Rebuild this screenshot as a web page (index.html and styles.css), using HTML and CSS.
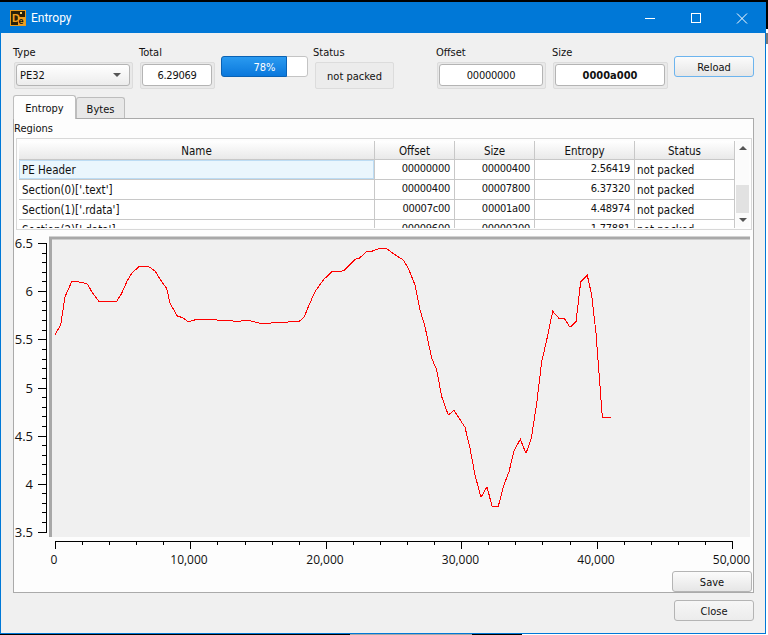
FILE: index.html
```html
<!DOCTYPE html>
<html lang="en">
<head>
    <meta charset="UTF-8">
    <meta name="viewport" content="width=device-width, initial-scale=1.0">
    <title>Entropy</title>
    <link rel="stylesheet" href="styles.css">
</head>
<body>
    <div class="window">
        <div class="titlebar">
            <svg class="app-icon" width="16" height="16" viewBox="0 0 16 16">
                <rect x="0.5" y="0.5" width="15" height="15" fill="#2a2008" stroke="#e89a1c"/>
                <rect x="8" y="7" width="7" height="8" fill="#f0a020"/>
                <text class="icon-d" x="2" y="12">D</text>
                <text class="icon-e" x="8.5" y="14">e</text>
                <rect x="10" y="2" width="2" height="2" fill="#f5d26a"/>
            </svg>
            <span class="title">Entropy</span>
            <div class="controls">
                <svg class="control" width="46" height="31" viewBox="0 0 46 31"><path d="M18 15.500h10" stroke="#fff" fill="none"/></svg>
                <svg class="control" width="46" height="31" viewBox="0 0 46 31"><rect x="18.500" y="10.500" width="9" height="9" stroke="#fff" fill="none"/></svg>
                <svg class="control" width="46" height="31" viewBox="0 0 46 31"><path d="M18 10.500l10 10M28 10.500l-10 10" stroke="#fff" fill="none"/></svg>
            </div>
        </div>

        <div class="toolbar">
            <div class="group group-type">
                <label>Type</label>
                <div class="frame">
                    <div class="combo">PE32<span class="arrow"></span></div>
                </div>
            </div>
            <div class="group group-total">
                <label>Total</label>
                <div class="frame"><div class="edit">6.29069</div></div>
            </div>
            <div class="progress">
                <div class="progress-fill" style="width: 78%"></div>
                <span class="progress-label">78%</span>
            </div>
            <div class="group group-status">
                <label>Status</label>
                <div class="status-box">not packed</div>
            </div>
            <div class="group group-offset">
                <label>Offset</label>
                <div class="frame"><div class="edit">00000000</div></div>
            </div>
            <div class="group group-size">
                <label>Size</label>
                <div class="frame"><div class="edit bold">0000a000</div></div>
            </div>
            <button class="btn btn-focus">Reload</button>
        </div>

        <div class="tabs">
            <div class="tab active">Entropy</div>
            <div class="tab">Bytes</div>
        </div>

        <div class="pane">
            <div class="regions">Regions</div>
            <div class="table-frame">
                <div class="table-clip">
                    <table>
                        <thead>
                            <tr><th class="c-name">Name</th><th class="c-num">Offset</th><th class="c-num">Size</th><th class="c-ent">Entropy</th><th class="c-ent">Status</th></tr>
                        </thead>
                        <tbody>
                            <tr><td class="selected">PE Header</td><td class="num">00000000</td><td class="num">00000400</td><td class="num">2.56419</td><td class="state">not packed</td></tr>
                            <tr><td>Section(0)['.text']</td><td class="num">00000400</td><td class="num">00007800</td><td class="num">6.37320</td><td class="state">not packed</td></tr>
                            <tr><td>Section(1)['.rdata']</td><td class="num">00007c00</td><td class="num">00001a00</td><td class="num">4.48974</td><td class="state">not packed</td></tr>
                            <tr><td>Section(2)['.data']</td><td class="num">00009600</td><td class="num">00000200</td><td class="num">1.77881</td><td class="state">not packed</td></tr>
                        </tbody>
                    </table>
                </div>
                <div class="scrollbar">
                    <span class="sb-up"></span>
                    <div class="sb-thumb"></div>
                    <span class="sb-down"></span>
                </div>
            </div>

            <!-- viewBox uses window coordinates so the numbers read straight off the plot -->
            <svg class="chart" width="739" height="340" viewBox="14 231 739 340">
                <rect x="49" y="237" width="701" height="300" fill="#f0f0f0"/>
                <path d="M50.500 537V238H750" fill="none" stroke="#a8a8a8" stroke-width="3"/>
                <g class="axis">
                    <path d="M46.500 243V533M38 243.500h9M42 253.500h5M42 262.500h5M42 272.500h5M42 281.500h5M38 291.500h9M42 301.500h5M42 310.500h5M42 320.500h5M42 330.500h5M38 339.500h9M42 349.500h5M42 359.500h5M42 368.500h5M42 378.500h5M38 388.500h9M42 397.500h5M42 407.500h5M42 416.500h5M42 426.500h5M38 436.500h9M42 445.500h5M42 455.500h5M42 464.500h5M42 474.500h5M38 484.500h9M42 493.500h5M42 503.500h5M42 512.500h5M42 522.500h5M38 532.500h9"/>
                    <path d="M55 541.500H733M55.500 542v7M82.500 542v3M109.500 542v3M136.500 542v3M163.500 542v3M190.500 542v7M217.500 542v3M245.500 542v3M272.500 542v3M299.500 542v3M326.500 542v7M353.500 542v3M380.500 542v3M407.500 542v3M434.500 542v3M461.500 542v7M488.500 542v3M515.500 542v3M542.500 542v3M570.500 542v3M597.500 542v7M624.500 542v3M651.500 542v3M678.500 542v3M705.500 542v3M732.500 542v7"/>
                </g>
                <g class="ylabels">
                    <text x="33" y="248">6.5</text>
                    <text x="33" y="296">6</text>
                    <text x="33" y="344">5.5</text>
                    <text x="33" y="393">5</text>
                    <text x="33" y="441">4.5</text>
                    <text x="33" y="489">4</text>
                    <text x="33" y="537">3.5</text>
                </g>
                <g class="xlabels">
                    <text x="54" y="564">0</text>
                    <text x="189" y="564">10,000</text>
                    <text x="325" y="564">20,000</text>
                    <text x="460.500" y="564">30,000</text>
                    <text x="596" y="564">40,000</text>
                    <text x="731.500" y="564">50,000</text>
                </g>
                <polyline class="curve" points="55,334.7 60.7,325 65,296.7 71.7,281.7 76.7,281.7 83.3,282.7 87.7,284.3 91.7,291.7 99.3,302 116.7,301.3 121.7,293.3 127.3,280.7 131.7,273.3 139.3,266.3 148.3,266.3 155,271 161.7,281.7 166.7,288.3 170,303.3 177.3,316 182.7,317.7 188.3,322 196.7,319.3 210,319.3 220,320.3 238.3,321.3 248.3,320.3 260,323.3 266,323.3 282.7,322.3 299.3,321.3 304.3,316.7 308.3,306.7 315,291.7 323.3,280 331.7,271.7 340,271.3 344,270.7 355,259.3 359.3,258.3 366.7,251.3 371.7,251.3 380,248.3 386,248.3 395,254.7 403.3,260 408.3,268.3 415,285 420,310 425,326.7 431.7,358.3 436.7,370 441.7,396.7 448.3,415 454,410.3 465,427.3 470,448.3 475,475 481,497.3 487,486.7 492,506.3 498.3,506.3 503.3,486.7 509,471.7 514.3,450 520.3,439.3 526,453.3 531.3,438.3 536.7,403.3 541.7,361.7 546.7,340 552.7,311.3 559,318.3 564.3,318.3 570,327.3 576,321.7 580.7,281.7 587.3,275.3 591.7,295 596,333.3 599.3,376.7 602.3,417.3 610.7,417.3"/>
            </svg>

            <div class="save-row"><button class="btn btn-save">Save</button></div>
        </div>

        <div class="footer"><button class="btn btn-plain">Close</button></div>
    </div>
    <div class="bottom-strip"></div>
</body>
</html>
```

FILE: styles.css
```css
body {
    margin: 0;
    width: 768px;
    height: 635px;
    overflow: hidden;
    background: linear-gradient(#000 29px, #fff 29px, #fff 33px, #777 33px, #777 44px, #fff 44px);
    font-family: "DejaVu Sans Condensed", "Open Sans", sans-serif;
    font-size: 11px;
    color: #111;
}

.window {
    box-sizing: border-box;
    width: 766px;
    height: 632px;
    margin-top: 2px;
    border: 1px solid #0078d7;
    background: #f0f0f0;
}

.bottom-strip {
    height: 1px;
    background: linear-gradient(90deg, #000 350px, #a8a8a8 350px, #a8a8a8 472px, #000 472px, #000 522px, #fff 522px);
}

/* title bar */
.titlebar {
    display: flex;
    align-items: center;
    height: 30px;
    background: #0078d7;
    color: #fff;
}
.app-icon {
    margin-left: 9px;
}
.icon-d {
    font: bold 11px "Liberation Sans", sans-serif;
    fill: #f0a020;
}
.icon-e {
    font: bold 9px "Liberation Sans", sans-serif;
    fill: #111;
}
.title {
    margin-left: 5px;
    font-family: Roboto, sans-serif;
    font-size: 12px;
}
.controls {
    display: flex;
    margin-left: auto;
}
.control {
    display: block;
}

/* top row */
.toolbar {
    display: flex;
    align-items: flex-start;
    padding: 13px 0 0 12px;
    height: 43px;
}
.group label {
    display: block;
    height: 16px;
    line-height: 14px;
}
.frame {
    box-sizing: border-box;
    height: 27px;
    margin-left: 1px;
    padding: 1px 2px 2px 1px;
    border: 1px solid #dcdcdc;
    background: #e9e9e9;
    border-radius: 2px;
}
.group-type {
    width: 120px;
}
.group-total {
    width: 76px;
    margin-left: 6px;
}
.group-status {
    width: 81px;
    margin-left: 5px;
}
.group-offset {
    width: 110px;
    margin-left: 42px;
}
.group-size {
    width: 116px;
    margin-left: 6px;
}
.combo, .edit {
    box-sizing: border-box;
    height: 22px;
    line-height: 22px;
    border: 1px solid #b4b4b4;
    border-radius: 3px;
    background: #fff;
}
.combo {
    position: relative;
    padding-left: 3px;
    background: linear-gradient(#fff, #ececec);
}
.arrow {
    position: absolute;
    right: 8px;
    top: 8px;
    border: 4px solid transparent;
    border-top: 4px solid #555;
    border-bottom: 0;
}
.edit {
    text-align: center;
    letter-spacing: -0.25px;
}
.bold {
    font-weight: bold;
    letter-spacing: 0;
}
.progress {
    position: relative;
    box-sizing: border-box;
    width: 87px;
    height: 21px;
    margin: 10px 0 0 6px;
    border: 1px solid #c4c4c4;
    border-radius: 3px;
    background: #fff;
}
.progress-fill {
    box-sizing: border-box;
    height: 21px;
    margin: -1px 0 0 -1px;
    border: 1px solid #0a62b4;
    border-radius: 3px 0 0 3px;
    background: linear-gradient(#2a9af0, #0a78dc);
}
.progress-label {
    position: absolute;
    top: 0;
    left: 0;
    right: 0;
    line-height: 21px;
    text-align: center;
    color: #fff;
}
.status-box {
    box-sizing: border-box;
    height: 27px;
    margin-left: 2px;
    line-height: 27px;
    text-align: center;
    border: 1px solid #dcdcdc;
    border-radius: 2px;
    background: #ececec;
}

/* buttons */
.btn {
    box-sizing: border-box;
    width: 80px;
    height: 21px;
    padding: 2px 0 0;
    font: inherit;
    color: #111;
    border: 1px solid #b4b4b4;
    border-radius: 3px;
    background: linear-gradient(#fbfbfb, #e6e6e6);
}
.btn-focus {
    margin: 10px 0 0 6px;
    border-color: #6cb4ee;
}
.btn-plain {
    background: linear-gradient(#f6f6f6, #ececec);
}

/* tabs */
.tabs {
    display: flex;
    align-items: flex-end;
    height: 29px;
    margin-left: 12px;
}
.tab {
    box-sizing: border-box;
    width: 49px;
    height: 21px;
    line-height: 23px;
    text-align: center;
    border: 1px solid #bdbdbd;
    border-bottom: 0;
    border-radius: 3px 3px 0 0;
    background: #e8e8e8;
}
.tab.active {
    width: 63px;
    height: 24px;
    margin-bottom: -1px;
    line-height: 25px;
    background: #fdfdfd;
    position: relative;
    z-index: 1;
}

.pane {
    box-sizing: border-box;
    width: 741px;
    height: 475px;
    margin-left: 12px;
    border: 1px solid #aaa;
    background: #fdfdfd;
}
.regions {
    height: 19px;
    line-height: 20px;
}

/* regions table */
.table-frame {
    box-sizing: border-box;
    display: flex;
    width: 736px;
    height: 92px;
    margin: 0 0 1px 2px;
    padding: 2px;
    border: 1px solid #d8d8d8;
}
.table-clip {
    width: 716px;
    height: 87px;
    overflow: hidden;
}
table {
    width: 716px;
    table-layout: fixed;
    border-collapse: separate;
    border-spacing: 0;
    font-size: 11.5px;
}
th {
    box-sizing: border-box;
    height: 19px;
    padding: 2px 0 0;
    font-weight: normal;
    border-right: 1px solid #c8c8c8;
    border-bottom: 1px solid #c8c8c8;
    background: linear-gradient(#fff, #e9e9e9);
}
.c-name {
    width: 356px;
}
.c-num {
    width: 80px;
}
.c-ent {
    width: 100px;
}
td {
    box-sizing: border-box;
    height: 20px;
    padding: 2px 3px 0;
    line-height: 17px;
    white-space: nowrap;
    overflow: hidden;
    border-right: 1px solid #c8c8c8;
    border-bottom: 1px solid #c8c8c8;
    background: #fff;
}
td.num {
    text-align: right;
    padding-top: 1px;
    padding-right: 4px;
    padding-bottom: 2px;
    font-size: 11px;
    letter-spacing: -0.25px;
    line-height: 16px;
}
td.state {
    padding-left: 2px;
}
td.selected {
    background: #eaf6fd;
    box-shadow: inset 0 0 0 1px #bcdcf4;
}

.scrollbar {
    display: flex;
    flex-direction: column;
    align-items: center;
    width: 13px;
    margin-left: 1px;
    background: #fbfbfb;
}
.sb-up, .sb-down {
    border: 4px solid transparent;
}
.sb-up {
    margin-top: 5px;
    border-top: 0;
    border-bottom: 4px solid #555;
}
.sb-thumb {
    width: 100%;
    height: 28px;
    margin-top: 35px;
    background: #e2e2e2;
}
.sb-down {
    margin-top: 5px;
    border-bottom: 0;
    border-top: 4px solid #555;
}

/* chart */
.chart {
    display: block;
}
.axis path {
    fill: none;
    stroke: #000;
    shape-rendering: crispEdges;
}
.ylabels text, .xlabels text {
    font-family: "Open Sans", sans-serif;
    font-size: 12px;
    fill: #111;
}
.ylabels text {
    font-size: 13px;
    text-anchor: end;
}
.xlabels text {
    text-anchor: middle;
}
.curve {
    fill: none;
    stroke: #f00;
    stroke-width: 1;
    shape-rendering: crispEdges;
}

.save-row {
    display: flex;
    justify-content: flex-end;
    padding-right: 1px;
}

.footer {
    display: flex;
    justify-content: flex-end;
    padding: 7px 11px 0 0;
}
```
